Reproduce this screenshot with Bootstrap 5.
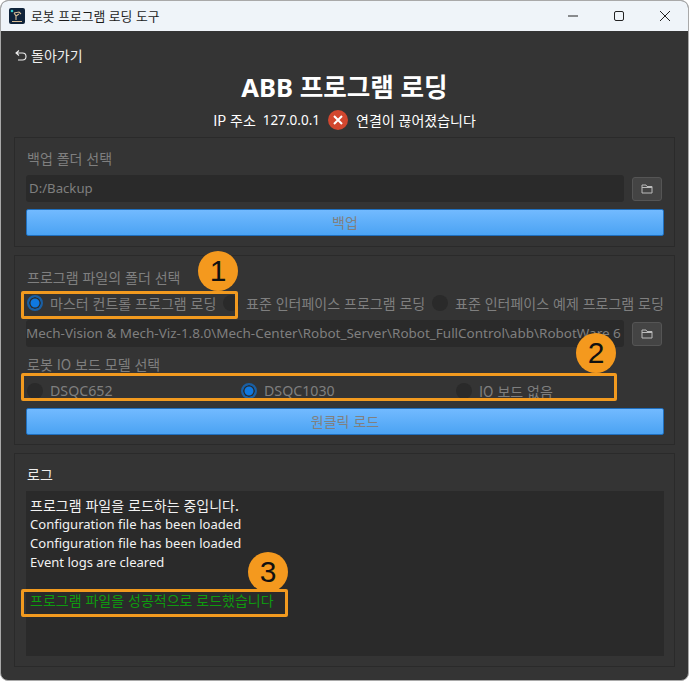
<!DOCTYPE html>
<html lang="ko">
<head>
<meta charset="utf-8">
<title>로봇 프로그램 로딩 도구</title>
<link href="https://cdn.jsdelivr.net/npm/bootstrap@5.3.0/dist/css/bootstrap.min.css" rel="stylesheet">
<style>
html,body{height:100%;margin:0;background:#fff;overflow:hidden}
body{font-family:"Noto Sans CJK KR","Noto Sans",sans-serif;font-size:14px;color:#fff;position:relative}
.winframe{width:689px;height:681px;border:1px solid #a9a9a9;border-radius:8px;background:#343434;overflow:hidden}
.titlebar{height:30px;background:#eff4f9;color:#1b1b1b;padding-left:8px}
.titletext{font-size:12.8px;margin-left:6px}
.winbtn{width:46px;height:30px}
.backrow{height:41px;padding:14px 0 0 14px;font-size:14px;line-height:20px;color:#eee}
.pagetitle{font-size:25.6px;font-weight:700;line-height:32px;margin:0;color:#fff;font-family:"Noto Sans","Noto Sans CJK KR",sans-serif}
.status{height:26px;margin-top:3px;font-size:14px;line-height:20px}
.ipnum{font-family:"Noto Sans",sans-serif;font-size:13.5px;margin-left:7px}
.erricon{margin:0 8px}
.panel{border:1px solid #2a2a2a;margin:0 13px;padding:10px 10px 0 11px}
.panel-a{height:110px;margin-top:4px}
.panel-b{height:190px;margin-top:8px;padding-top:11px}
.panel-c{height:214px;margin-top:8px}
.fieldlabel{line-height:20px;color:#7f7f7f;padding-left:1px}
.fieldrow{margin-top:7px}
.fieldbox{height:27px;background:#2a2a2a;border-radius:3px;color:#7f7f7f;font-family:"Noto Sans",sans-serif;font-size:13.2px;line-height:27px;white-space:nowrap;overflow:hidden;flex:1 1 auto;min-width:0}
.pathtext{font-size:13.47px}
.indent{padding-left:3px}
.folderbtn{width:30px;height:24px;background:#444;border:1px solid #555;border-radius:3px;margin-left:8px;margin-right:2px;flex:none}
.bluebtn{height:27px;margin-top:7px;background:linear-gradient(#72baff,#4ba3f3);border:1px solid #1f6fbe;border-radius:2px;color:#808080;line-height:25px;text-align:center}
.radiorow{height:20px;color:#7f7f7f;white-space:nowrap;padding-left:1px}
.rowgap-6{margin-top:6px}
.rowgap-7{margin-top:7px}
.rdot{width:16px;height:16px;border-radius:50%;background:#2a2a2a;flex:none;margin-right:7px}
.rdot-on{background:#0f78e0;border:2px solid #1a5fa3;box-shadow:inset 0 0 0 1.500px #2a2a2a}
.rad{display:flex;align-items:center;height:20px;flex:none}
.w196{width:196px}.w209{width:209px}.w214{width:214px}.w215{width:215px}
.latinrad{font-family:"Noto Sans",sans-serif;font-size:14.2px}
.loglabel{line-height:20px;color:#eee;padding-left:1px}
.logbox{height:165px;background:#2a2a2a;margin-top:7px;padding:5px 4px;font-size:14px;line-height:19px;color:#f2f2f2;white-space:nowrap}
.latinlog{font-family:"Noto Sans",sans-serif;font-size:13.05px}
.oklog{color:#0f9a0f;margin-top:19px}
.callout{position:absolute;width:40px;height:40px;border-radius:50%;background:#f4991e;color:#111;font-family:"Liberation Sans",sans-serif;font-size:30px;line-height:40px;text-align:center}
.call1{left:198px;top:251px}.call2{left:576px;top:333px}.call3{left:248px;top:552px}
.hl{position:absolute;border:3px solid #f29a1f;border-radius:2px}
.hl1{left:21px;top:291px;width:217px;height:28px}
.hl2{left:21px;top:373px;width:596px;height:28px}
.hl3{left:21px;top:589px;width:267px;height:28px}
</style>
</head>
<body>
<div class="winframe">
  <div class="titlebar d-flex align-items-center">
    <svg width="16" height="16" viewBox="0 0 16 16"><rect width="16" height="16" rx="2" fill="#10233a"/><path d="M3 13.500h10M7 12V8L5 5M5 5l5-1 2 2M7 8l3-2" stroke="#d8bd95" stroke-width="1.100" fill="none"/><circle cx="3" cy="3" r="1.300" fill="#3cc"/></svg>
    <span class="titletext">로봇 프로그램 로딩 도구</span>
    <div class="ms-auto d-flex">
      <div class="winbtn d-flex align-items-center justify-content-center"><svg width="12" height="12" viewBox="0 0 12 12"><path d="M1 6h10" stroke="#222" stroke-width="1"/></svg></div>
      <div class="winbtn d-flex align-items-center justify-content-center"><svg width="12" height="12" viewBox="0 0 12 12"><rect x="1.500" y="1.500" width="9" height="9" rx="1.500" fill="none" stroke="#222"/></svg></div>
      <div class="winbtn d-flex align-items-center justify-content-center"><svg width="12" height="12" viewBox="0 0 12 12"><path d="M1 1l10 10M11 1L1 11" stroke="#222" stroke-width="1"/></svg></div>
    </div>
  </div>
  <div class="backrow">
    <div class="d-flex align-items-center gap-1">
      <svg width="12" height="11" viewBox="0 0 12 11"><path d="M4 .5 1 3l3 2.500M1 3h6.500a3.500 3.500 0 0 1 0 7H3" fill="none" stroke="#eee" stroke-width="1.100"/></svg>
      <span>돌아가기</span>
    </div>
  </div>
  <h1 class="pagetitle text-center">ABB 프로그램 로딩</h1>
  <div class="status d-flex align-items-center justify-content-center">
    <span>IP 주소</span><span class="ipnum">127.0.0.1</span>
    <svg class="erricon" width="20" height="20" viewBox="0 0 20 20"><circle cx="10" cy="10" r="10" fill="#d2472f"/><path d="M6 6l8 8M14 6l-8 8" stroke="#fff" stroke-width="2"/></svg>
    <span>연결이 끊어졌습니다</span>
  </div>
  <section class="panel panel-a">
    <div class="fieldlabel">백업 폴더 선택</div>
    <div class="d-flex align-items-center fieldrow">
      <div class="fieldbox indent">D:/Backup</div>
      <div class="folderbtn d-flex align-items-center justify-content-center"><svg width="12" height="11" viewBox="0 0 12 11"><path d="M1 2h4l1 1.500h5V10H1zM1 4.500h10" fill="none" stroke="#bbb"/></svg></div>
    </div>
    <div class="bluebtn">백업</div>
  </section>
  <section class="panel panel-b">
    <div class="fieldlabel">프로그램 파일의 폴더 선택</div>
    <div class="radiorow rowgap-6 d-flex">
      <div class="rad w196"><span class="rdot rdot-on"></span>마스터 컨트롤 프로그램 로딩</div>
      <div class="rad w209"><span class="rdot"></span>표준 인터페이스 프로그램 로딩</div>
      <div class="rad"><span class="rdot"></span>표준 인터페이스 예제 프로그램 로딩</div>
    </div>
    <div class="d-flex align-items-center fieldrow">
      <div class="fieldbox pathtext">Mech-Vision &amp; Mech-Viz-1.8.0\Mech-Center\Robot_Server\Robot_FullControl\abb\RobotWare 6</div>
      <div class="folderbtn d-flex align-items-center justify-content-center"><svg width="12" height="11" viewBox="0 0 12 11"><path d="M1 2h4l1 1.500h5V10H1zM1 4.500h10" fill="none" stroke="#bbb"/></svg></div>
    </div>
    <div class="fieldlabel rowgap-7">로봇 IO 보드 모델 선택</div>
    <div class="radiorow rowgap-7 d-flex">
      <div class="rad w214 latinrad"><span class="rdot"></span>DSQC652</div>
      <div class="rad w215 latinrad"><span class="rdot rdot-on"></span>DSQC1030</div>
      <div class="rad"><span class="rdot"></span>IO 보드 없음</div>
    </div>
    <div class="bluebtn">원클릭 로드</div>
  </section>
  <section class="panel panel-c">
    <div class="loglabel">로그</div>
    <div class="logbox">
      <div>프로그램 파일을 로드하는 중입니다.</div>
      <div class="latinlog">Configuration file has been loaded</div>
      <div class="latinlog">Configuration file has been loaded</div>
      <div class="latinlog">Event logs are cleared</div>
      <div class="oklog">프로그램 파일을 성공적으로 로드했습니다</div>
    </div>
  </section>
</div>
<div class="hl hl1"></div>
<div class="hl hl2"></div>
<div class="hl hl3"></div>
<div class="callout call1">1</div>
<div class="callout call2">2</div>
<div class="callout call3">3</div>
</body>
</html>
